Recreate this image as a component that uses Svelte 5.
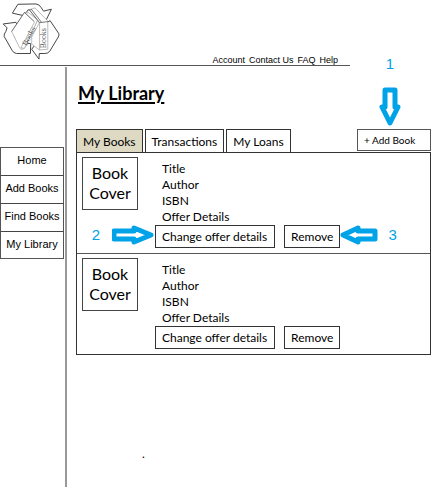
<script>
  const links = ['Account', 'Contact Us', 'FAQ', 'Help'];
  const menu = ['Home', 'Add Books', 'Find Books', 'My Library'];
  const tabs = ['My Books', 'Transactions', 'My Loans'];
  const fields = ['Title', 'Author', 'ISBN', 'Offer Details'];
  const books = [{ id: 1, notes: true }, { id: 2, notes: false }];
  let active = $state('My Books');
</script>

<div class="page">
  <header>
    <svg class="logo" viewBox="0 0 210 198" role="img" aria-label="Recycled books">
      <g fill="#fff" stroke="#444" stroke-width="3" stroke-linejoin="round">
        <path d="M36 40 L53 13 L108 12 Q118 13 123 22 L131 34 L155 28 L139 61 L112 57 L98 29 L84 30 L72 48 Z" />
        <path d="M8 73 L47 68 L62 94 L52 92 L43 112 L54 129 L92 133 L91 163 L49 163 Q39 162 35 153 L11 111 Q10 104 16 96 L20 85 Z" />
        <path d="M126 77 L151 63 L178 103 Q179 109 174 116 L150 156 Q145 163 135 163 L118 163 L117 180 L95 150 L116 122 L118 133 L136 131 Z" />
      </g>
      <g fill="#fff" stroke="#999" stroke-width="2" stroke-linejoin="round">
        <path d="M34 96 L73 38 L111 65 L73 147 Q62 155 57 143 Z" />
        <path d="M74 38 L86 39 L113 61 L73 147 L62 146 L103 68 Z" />
        <path d="M88 30 L105 24 L144 64 L144 150 L118 152 L95 134 L95 112 L118 70 Z" />
        <path d="M34 96 L73 38 L103 66 M88 30 L119 69 L144 66 M93 27 L124 67" stroke="#333" />
        <path d="M119 69 V152" />
      </g>
      <text x="0" y="0" transform="translate(138 147) rotate(-90)">Books</text>
      <text x="0" y="0" transform="translate(79 141) rotate(-62)">Books</text>
    </svg>
    <nav class="links" aria-label="Site">
      {#each links as link}<a href="#site">{link}</a>{/each}
    </nav>
  </header>

  <div class="body">
    <aside>
      <nav class="menu" aria-label="Library">
        {#each menu as item}<a href="#menu">{item}</a>{/each}
      </nav>
    </aside>

    <main>
      <h1>My Library</h1>
      <div class="bar">
        <div class="tabs">
          {#each tabs as tab}
            <button class="tab" class:active={active === tab} onclick={() => (active = tab)}>{tab}</button>
          {/each}
        </div>
        <div class="add-wrap">
          <button class="add">+ Add Book</button>
          <div class="note one">
            <span>1</span>
            <svg width="22" height="40" viewBox="0 0 22 40"><path d="M6 3 H16 V20 H19 L11 36 L3 20 H6 Z" /></svg>
          </div>
        </div>
      </div>

      <section class="panel">
        {#each books as book (book.id)}
          <article>
            <div class="cover">Book Cover</div>
            <div class="info">
              {#each fields as field}<p>{field}</p>{/each}
              <div class="actions">
                <button>Change offer details</button>
                <button>Remove</button>
                {#if book.notes}
                  <div class="note two">
                    <span>2</span>
                    <svg width="42" height="20" viewBox="0 0 42 20"><path d="M2 6 H22 V3 L39 10 L22 17 V14 H2 Z" /></svg>
                  </div>
                  <div class="note three">
                    <svg width="38" height="20" viewBox="0 0 38 20"><path d="M35 6 H18 V3 L3 10 L18 17 V14 H35 Z" /></svg>
                    <span>3</span>
                  </div>
                {/if}
              </div>
            </div>
          </article>
        {/each}
      </section>
      <p class="dot">.</p>
    </main>
  </div>
</div>

<style>
  :global(body) { background: #fff; }
  .page { color: #000; font-family: Lato, "Open Sans", sans-serif; font-size: 12px; }
  a { color: inherit; text-decoration: none; }
  p, h1 { margin: 0; }
  button { font: inherit; color: inherit; background: #fff; border: 1px solid #333; padding: 0; white-space: nowrap; }

  header { display: flex; align-items: flex-end; justify-content: space-between; border-bottom: 1px solid #555; margin-right: 83px; }
  .logo { width: 70px; height: 65px; flex: none; }
  .logo text { font-family: "Liberation Serif", serif; font-size: 24px; fill: #555; }
  .links { display: flex; gap: 4px; padding-right: 12px; font: 9px/10px "Liberation Sans", sans-serif; }

  .body { display: flex; margin-top: 1px; }
  aside { flex: none; width: 65px; border-right: 2px solid #999; }
  .menu { margin: 80px 1px 0 0; border: 1px solid #555; font: 11px/24px "Liberation Sans", sans-serif; text-align: center; }
  .menu a { display: block; height: 27px; border-bottom: 1px solid #444; }
  .menu a:last-child { height: 26px; border-bottom: 0; }

  main { flex: 1; min-width: 0; padding: 16px 2px 26px 9px; }
  h1 { font-size: 18px; line-height: 20px; font-weight: 700; padding: 0 0 2px 2px; text-decoration: underline; text-decoration-thickness: 2px; text-underline-offset: 2px; }
  .bar { display: flex; align-items: flex-start; justify-content: space-between; margin-top: 24px; }
  .tabs { display: flex; gap: 2px; }
  .tab { height: 23px; padding: 0 6px; border-bottom: 0; }
  .tab.active { background: #ddd9c3; }
  .add-wrap { position: relative; }
  .add { width: 74px; height: 22px; padding-left: 6px; font-size: 10px; text-align: left; border-color: #555; }

  .panel { border: 1px solid #333; }
  article { display: flex; gap: 17px; padding: 4px 5px 5px; }
  article + article { border-top: 1px solid #555; }
  .cover { flex: none; box-sizing: border-box; width: 56px; height: 53px; padding: 5px; border: 1px solid #444; font-size: 16px; line-height: 20px; text-align: center; }
  .info { padding-top: 4px; }
  .info p { padding-left: 7px; line-height: 16px; }
  .actions { position: relative; display: flex; gap: 9px; }
  .actions button { height: 23px; padding: 0 6px; }
  .actions button:first-child { padding: 0 7px 0 6px; }

  .note { position: absolute; display: flex; align-items: center; gap: 10px; color: #00a2e8; font: 15px/16px "Liberation Sans", sans-serif; pointer-events: none; }
  .note path { fill: #fff; stroke: #00a2e8; stroke-width: 5; stroke-linejoin: round; }
  .one { flex-direction: column; bottom: 24px; left: 22px; gap: 15px; }
  .two { right: 100%; top: 0; gap: 12px; margin-right: 1px; }
  .three { left: 100%; top: 0; }
  .dot { margin-top: 91px; padding-left: 66px; }
</style>
